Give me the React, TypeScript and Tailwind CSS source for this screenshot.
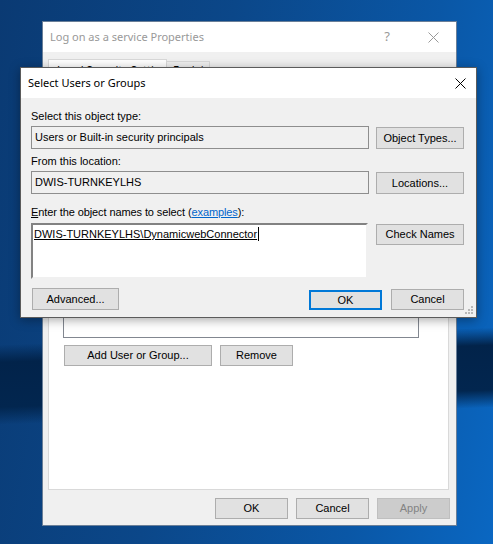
import React from 'react'
import clsx from 'clsx'

const ui = "font-['Liberation_Sans',Arial,sans-serif] text-[11px] leading-[13px] text-black"
const seg = "font-['Segoe_UI','Noto_Sans',sans-serif]"

const Btn = ({
  children,
  className,
  isDefault,
  disabled,
}: {
  children: React.ReactNode
  className?: string
  isDefault?: boolean
  disabled?: boolean
}) => (
  <div
    className={clsx(
      'flex shrink-0 items-center justify-center',
      ui,
      isDefault
        ? 'border-2 border-[#0078d7] bg-[#e1e1e1]'
        : disabled
          ? 'border border-[#bfbfbf] bg-[#cccccc] !text-[#838383]'
          : 'border border-[#adadad] bg-[#e1e1e1]',
      className,
    )}
  >
    {children}
  </div>
)

const CloseX = ({ color }: { color: string }) => (
  <svg width="11" height="11" viewBox="0 0 11 11">
    <path d="M0.5 0.5 L10.5 10.5 M10.5 0.5 L0.5 10.5" stroke={color} strokeWidth="1" />
  </svg>
)

const BackWindow = () => (
  <div className="absolute left-[42px] top-[21px] z-0 flex h-[505px] w-[415px] flex-col border border-[#6a7f98] bg-[#f0f0f0]">
    {/* title bar */}
    <div className="flex h-[30px] items-center bg-white pl-[7px]">
      <span className={clsx(seg, 'flex-1 text-[11px] text-[#999999]')}>Log on as a service Properties</span>
      <span className={clsx(seg, 'mr-[38px] text-[13px] text-[#999999]')}>?</span>
      <div className="mr-[17px] flex items-center">
        <CloseX color="#999999" />
      </div>
    </div>

    <div className="flex flex-1 flex-col pl-[5px] pr-[7px] pt-[7px]">
      {/* tabs */}
      <div className="flex h-[21px] items-start">
        <div className={clsx(seg, 'relative z-10 flex h-[21px] w-[119px] items-center overflow-hidden whitespace-nowrap border border-b-0 border-[#d9d9d9] bg-white pl-[8px] text-[11px]')}>
          Local Security Setting
        </div>
        <div className={clsx(seg, 'mt-[2px] flex h-[19px] w-[43px] items-center overflow-hidden whitespace-nowrap border border-l-0 border-[#d9d9d9] bg-[#f0f0f0] pl-[6px] text-[11px]')}>
          Explain
        </div>
      </div>
      <div className="-mt-px flex h-[411px] flex-col border border-[#d9d9d9] bg-white pl-[14px] pr-[29px] pt-[14px]">
        <div className="flex h-[24px] items-center gap-2">
          <div className="h-[16px] w-[16px] bg-[#c9d6e6]" />
          <span className={ui}>Log on as a service</span>
        </div>
        <div className="mt-[3px] h-[217px] border border-[#828790] bg-white" />
        <div className="mt-[7px] flex gap-[8px] pl-px">
          <Btn className="h-[21px] w-[148px]">Add User or Group...</Btn>
          <Btn className="h-[21px] w-[73px]">Remove</Btn>
        </div>
      </div>
      <div className="mt-[8px] flex justify-end gap-[8px]">
        <Btn className="h-[21px] w-[73px]">OK</Btn>
        <Btn className="h-[21px] w-[73px]">Cancel</Btn>
        <Btn className="-mr-px h-[21px] w-[73px]" disabled>
          Apply
        </Btn>
      </div>
    </div>
  </div>
)

const ReadOnlyRow = ({ value, button }: { value: string; button: string }) => (
  <div className="mt-[3px] flex items-start gap-[7px]">
    <div className={clsx(ui, 'flex h-[23px] w-[338px] items-center border border-[#8e8e8e] bg-[#f0f0f0] pl-[3px]')}>{value}</div>
    <Btn className="mt-px h-[22px] w-[88px]">{button}</Btn>
  </div>
)

const SelectDialog = () => (
  <div className="absolute left-[20px] top-[67px] z-10 flex h-[251px] w-[457px] flex-col border border-[#5b5b5b] bg-[#f0f0f0] shadow-[0_2px_10px_rgba(0,0,0,0.35)]">
    <div className="flex h-[30px] items-center bg-white pl-[7px]">
      <span className={clsx(seg, 'flex-1 text-[11px] text-black')}>Select Users or Groups</span>
      <div className="mr-[10px] flex items-center">
        <CloseX color="#000000" />
      </div>
    </div>

    <div className="relative flex flex-1 flex-col pl-[10px] pt-[12px]">
      <div className={ui}>Select this object type:</div>
      <ReadOnlyRow value="Users or Built-in security principals" button="Object Types..." />

      <div className={clsx(ui, 'mt-[6px]')}>From this location:</div>
      <ReadOnlyRow value="DWIS-TURNKEYLHS" button="Locations..." />

      <div className={clsx(ui, 'mt-[12px] tracking-[-0.1px]')}>
        <span className="underline">E</span>nter the object names to select (<span className="text-[#0066cc] underline">examples</span>):
      </div>
      <div className="mt-[4px] flex items-start gap-[7px]">
        <div className="flex h-[56px] w-[337px] items-start border-2 border-b-[#f0f0f0] border-l-[#828282] border-r-[#f0f0f0] border-t-[#828282] bg-white pl-[1px] pt-[2px]">
          <span className="block border-r border-black pr-px font-['Liberation_Sans',Arial,sans-serif] text-[11px] leading-[14px] text-black underline">
            DWIS-TURNKEYLHS\DynamicwebConnector
          </span>
        </div>
        <Btn className="ml-px mt-px h-[21px] w-[88px]">Check Names</Btn>
      </div>

      <div className="mt-[9px] flex items-start">
        <Btn className="ml-px h-[22px] w-[87px]">Advanced...</Btn>
        <div className="flex-1" />
        <Btn className="mt-[2px] h-[20px] w-[73px]" isDefault>
          OK
        </Btn>
        <Btn className="ml-[9px] mr-[12px] mt-px h-[21px] w-[73px]">Cancel</Btn>
      </div>

      {/* resize grip */}
      <svg className="absolute bottom-[2px] right-[2px]" width="10" height="10" viewBox="0 0 10 10">
        <rect x="7" y="1" width="2" height="2" fill="#b8b8b8" />
        <rect x="4" y="4" width="2" height="2" fill="#b8b8b8" />
        <rect x="7" y="4" width="2" height="2" fill="#b8b8b8" />
        <rect x="1" y="7" width="2" height="2" fill="#b8b8b8" />
        <rect x="4" y="7" width="2" height="2" fill="#b8b8b8" />
        <rect x="7" y="7" width="2" height="2" fill="#b8b8b8" />
      </svg>
    </div>
  </div>
)

export default function App() {
  return (
    <div className="relative h-[544px] w-[493px] overflow-hidden bg-[linear-gradient(100deg,#0a3a73_0%,#0b4789_40%,#0a57a6_75%,#0a67c2_100%)]">
      {/* wallpaper dark band */}
      <div className="absolute left-[-20px] top-[336px] h-[80px] w-[540px] -rotate-2 bg-[linear-gradient(180deg,rgba(2,30,62,0)_0%,#02234a_22%,#02264f_78%,rgba(2,30,62,0)_100%)]" />
      <BackWindow />
      <SelectDialog />
    </div>
  )
}
